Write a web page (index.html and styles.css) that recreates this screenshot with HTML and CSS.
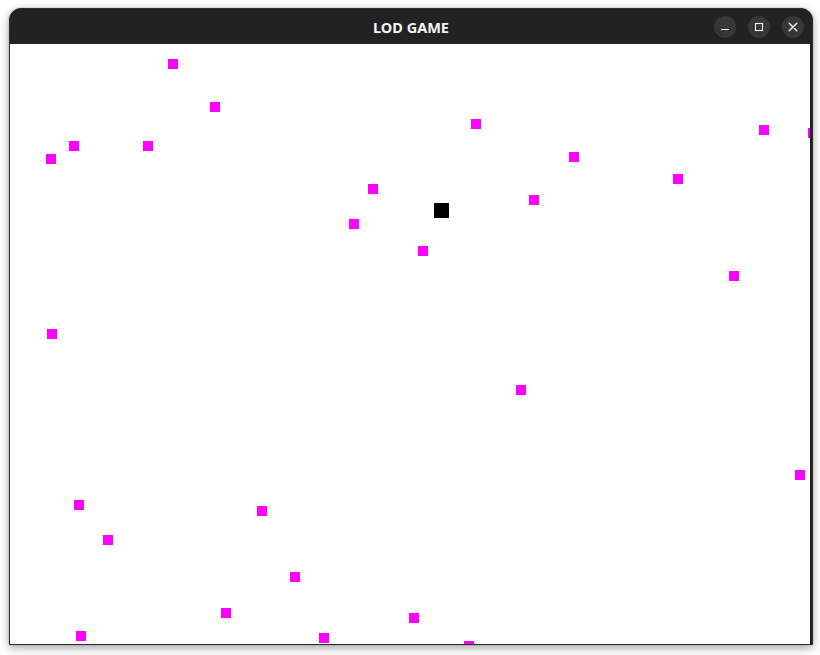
FILE: index.html
```html
<!DOCTYPE html>
<html>
<head>
<meta charset="utf-8">
<title>LOD GAME</title>
<link rel="stylesheet" href="styles.css">
</head>
<body>
<div class="window">
  <div class="titlebar">
    <div class="title">LOD GAME</div>
    <div class="controls">
      <button class="ctl" aria-label="Minimize">
        <svg width="10" height="10" viewBox="0 0 10 10"><line x1="1" y1="7.5" x2="9" y2="7.5" stroke="#f2f2f2" stroke-width="1.2"/></svg>
      </button>
      <button class="ctl" aria-label="Maximize">
        <svg width="10" height="10" viewBox="0 0 10 10"><rect x="1.5" y="1.5" width="7" height="7" fill="none" stroke="#f2f2f2" stroke-width="1.1"/></svg>
      </button>
      <button class="ctl" aria-label="Close">
        <svg width="10" height="10" viewBox="0 0 10 10"><path d="M1.2 1.2 L8.8 8.8 M8.8 1.2 L1.2 8.8" stroke="#f2f2f2" stroke-width="1.4" stroke-linecap="round"/></svg>
      </button>
    </div>
  </div>
  <div class="canvas">
    <div class="dot" style="left:158px;top:15px"></div>
    <div class="dot" style="left:200px;top:58px"></div>
    <div class="dot" style="left:59px;top:97px"></div>
    <div class="dot" style="left:133px;top:97px"></div>
    <div class="dot" style="left:36px;top:110px"></div>
    <div class="dot" style="left:358px;top:140px"></div>
    <div class="dot" style="left:339px;top:175px"></div>
    <div class="dot" style="left:408px;top:202px"></div>
    <div class="dot" style="left:461px;top:75px"></div>
    <div class="dot" style="left:749px;top:81px"></div>
    <div class="dot" style="left:798px;top:84px"></div>
    <div class="dot" style="left:559px;top:108px"></div>
    <div class="dot" style="left:663px;top:130px"></div>
    <div class="dot" style="left:519px;top:151px"></div>
    <div class="dot" style="left:719px;top:227px"></div>
    <div class="dot" style="left:37px;top:285px"></div>
    <div class="dot" style="left:506px;top:341px"></div>
    <div class="dot" style="left:785px;top:426px"></div>
    <div class="dot" style="left:64px;top:456px"></div>
    <div class="dot" style="left:247px;top:462px"></div>
    <div class="dot" style="left:93px;top:491px"></div>
    <div class="dot" style="left:280px;top:528px"></div>
    <div class="dot" style="left:211px;top:564px"></div>
    <div class="dot" style="left:399px;top:569px"></div>
    <div class="dot" style="left:66px;top:587px"></div>
    <div class="dot" style="left:309px;top:589px"></div>
    <div class="dot" style="left:454px;top:597px"></div>
    <div class="player" style="left:424px;top:159px"></div>
  </div>
</div>
</body>
</html>
```
FILE: styles.css
```css
html, body {
  margin: 0;
  padding: 0;
  background: #ffffff;
}
body {
  width: 820px;
  height: 655px;
  overflow: hidden;
  padding-top: 8px;
  padding-left: 9px;
  box-sizing: border-box;
}
.window {
  width: 802px;
  border: 1px solid #2e2e2e;
  border-radius: 12px 12px 0 0;
  overflow: hidden;
  box-shadow: 0 3px 10px rgba(0, 0, 0, 0.35), 0 0 2px rgba(0, 0, 0, 0.25);
  background: #222222;
}
.titlebar {
  position: relative;
  height: 35px;
  background: #222222;
  display: flex;
  align-items: center;
  justify-content: center;
}
.title {
  font-family: "Noto Sans", "DejaVu Sans", sans-serif;
  font-weight: 700;
  font-size: 14.5px;
  color: #f5f5f5;
  letter-spacing: 0;
}
.controls {
  position: absolute;
  right: 8px;
  top: 7px;
  display: flex;
  gap: 12px;
}
.ctl {
  width: 22px;
  height: 22px;
  border-radius: 50%;
  border: none;
  padding: 0;
  background: #373737;
  display: flex;
  align-items: center;
  justify-content: center;
}
.ctl svg {
  display: block;
}
.canvas {
  position: relative;
  width: 800px;
  height: 600px;
  background: #ffffff;
  overflow: hidden;
}
.dot {
  position: absolute;
  width: 10px;
  height: 10px;
  background: #ff00ff;
}
.player {
  position: absolute;
  width: 15px;
  height: 15px;
  background: #000000;
}
```
